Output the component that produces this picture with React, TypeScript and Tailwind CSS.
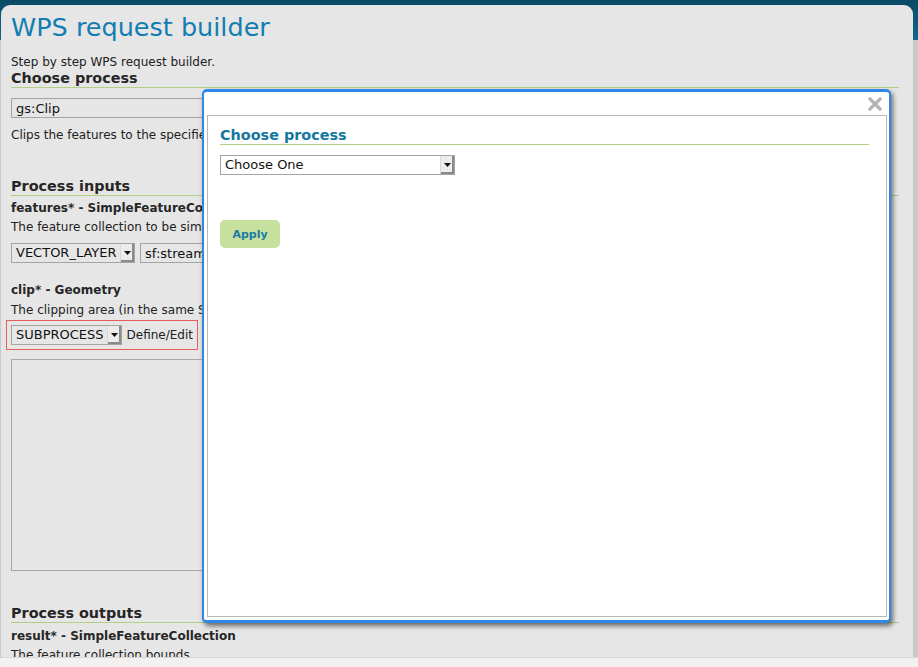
const font = { fontFamily: '"DejaVu Sans", Verdana, sans-serif' }

function Arrow() {
  return (
    <span className="flex h-full w-[14px] items-center justify-center border-l border-[#d8d8d8] bg-[#ececec] shadow-[inset_-2px_-2px_0_#8a8a8a]">
      <svg width="7" height="4" viewBox="0 0 7 4">
        <path d="M0 0h7L3.5 4z" fill="#111" />
      </svg>
    </span>
  )
}

function Select({ label, width, white }: { label: string; width: string; white?: boolean }) {
  return (
    <div
      className={`flex h-[20px] ${width} items-stretch border border-[#a4a4a4] ${white ? 'bg-white' : 'bg-[#e6e6e6]'}`}
    >
      <span className="flex-1 truncate pl-[4px] text-[13px] leading-[18px] text-[#111]">{label}</span>
      <Arrow />
    </div>
  )
}

function Heading({ children, teal }: { children: React.ReactNode; teal?: boolean }) {
  return (
    <h2
      className={`border-b border-[#b3cf86] text-[14.4px] leading-[17px] font-bold ${
        teal ? 'text-[#12789f]' : 'text-[#262626]'
      }`}
    >
      {children}
    </h2>
  )
}

export default function App() {
  return (
    <div
      className="relative h-[667px] w-[918px] overflow-hidden bg-[#c9c9c9] text-[12px] leading-[15px] text-[#222]"
      style={font}
    >
      <div className="absolute inset-x-0 top-0 h-[40px] bg-gradient-to-b from-[#094a66] to-[#11688a]" />

      <div className="relative ml-[1px] mt-[5px] h-[652px] w-[912px] overflow-hidden rounded-t-[9px] bg-[#e6e6e6] pl-[10px] pr-[14px] pt-[7px]">
        <h1 className="text-[25.5px] leading-[30px] font-normal text-[#127db2]">WPS request builder</h1>
        <p className="mt-[13px]">Step by step WPS request builder.</p>
        <Heading>Choose process</Heading>

        <div className="mt-[10px] flex h-[20px] w-[400px] items-center border border-[#a4a4a4] pl-[4px] text-[13px] text-[#111]">
          gs:Clip
        </div>
        <p className="mt-[10px]">Clips the features to the specified bounds</p>

        <div className="mt-[35px]">
          <Heading>Process inputs</Heading>
        </div>
        <p className="mt-[5px] font-bold text-[#262626]">features* - SimpleFeatureCollection</p>
        <p className="mt-[4px]">The feature collection to be simplified</p>
        <div className="mt-[8px] flex gap-[5px]">
          <Select label="VECTOR_LAYER" width="w-[124px]" />
          <div className="flex h-[20px] w-[200px] items-center border border-[#a4a4a4] pl-[4px] text-[13px] text-[#111]">
            sf:streams
          </div>
        </div>

        <p className="mt-[20px] font-bold text-[#262626]">clip* - Geometry</p>
        <p className="mt-[5px]">The clipping area (in the same SRS as the feature collection)</p>
        <div className="-ml-[5px] mt-[2px] flex w-[192px] items-center gap-[5px] border border-[#ea5c5c] p-[4px]">
          <Select label="SUBPROCESS" width="w-[111px]" />
          <span className="text-[12px]">Define/Edit</span>
        </div>
        <div className="mt-[9px] h-[212px] w-[400px] border border-[#a8a8a8]" />

        <div className="mt-[34px]">
          <Heading>Process outputs</Heading>
        </div>
        <p className="mt-[6px] font-bold text-[#262626]">result* - SimpleFeatureCollection</p>
        <p className="mt-[4px]">The feature collection bounds</p>
      </div>

      <div className="absolute inset-x-0 bottom-0 h-[10px] border-t border-[#d6d6d6] bg-[#f2f1ef]" />

      {/* dialog */}
      <div className="absolute left-[202px] top-[89px] flex h-[534px] w-[689px] flex-col rounded-[5px] border-x-2 border-y-[3px] border-[#2e88e4] bg-white shadow-[2px_3px_5px_rgba(0,0,0,0.55)]">
        <div className="flex h-[23px] justify-end pr-[7px] pt-[5px]">
          <svg width="14" height="14" viewBox="0 0 14 14">
            <path d="M2 2l10 10M12 2L2 12" stroke="#b4b4b4" strokeWidth="3.2" strokeLinecap="square" />
          </svg>
        </div>
        <div className="mb-[3px] ml-[3px] mr-[2px] flex-1 border border-[#b8b8b8] pl-[12px] pr-[17px] pt-[11px]">
          <Heading teal>Choose process</Heading>
          <div className="mt-[10px]">
            <Select label="Choose One" width="w-[235px]" white />
          </div>
          <button className="mt-[45px] h-[28px] w-[60px] rounded-[5px] bg-[#c7e09d] text-[11px] font-bold text-[#1b7ba3]">
            Apply
          </button>
        </div>
      </div>
    </div>
  )
}
